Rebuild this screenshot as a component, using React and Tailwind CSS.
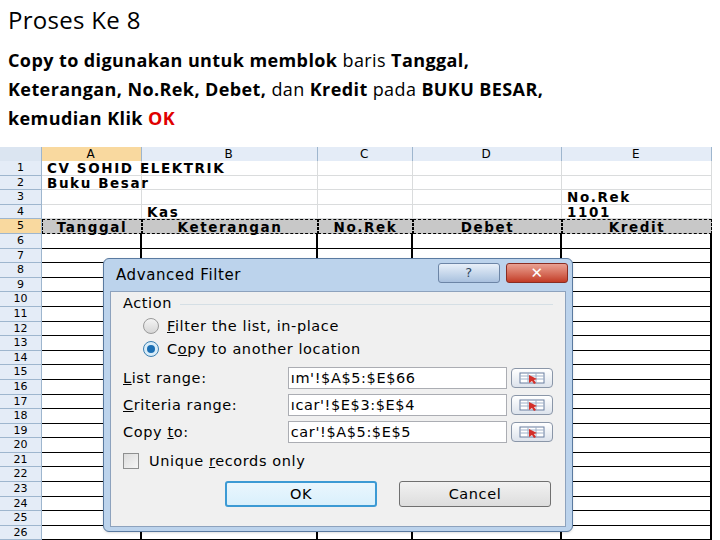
import React from "react";

const cols = [
  { k: "A", w: 100 },
  { k: "B", w: 176 },
  { k: "C", w: 95 },
  { k: "D", w: 149 },
  { k: "E", w: 150 },
];

const cells = {
  1: { A: "CV SOHID ELEKTRIK" },
  2: { A: "Buku Besar" },
  3: { E: "No.Rek" },
  4: { B: "Kas", E: "1101" },
  5: { A: "Tanggal", B: "Keterangan", C: "No.Rek", D: "Debet", E: "Kredit" },
};

function Pick() {
  return (
    <div className="w-[42px] h-[20px] border border-[#8a96a8] rounded-sm bg-gradient-to-b from-white to-[#dde3ec] flex items-center justify-center">
      <svg width="26" height="12" viewBox="0 0 26 12">
        <rect x="1" y="1" width="24" height="10" fill="#fff" stroke="#6a7fa0" />
        <path d="M1 4h24M1 7h24M9 1v10M17 1v10" stroke="#9fb0c8" />
        <path d="M10 3l8 4-3 1 2 3-2 1-2-3-3 2z" fill="#d3302a" />
      </svg>
    </div>
  );
}

export default function App() {
  const rows = Array.from({ length: 26 }, (_, i) => i + 1);
  return (
    <div className="w-[720px] h-[540px] overflow-hidden bg-white relative" style={{ fontFamily: "'Open Sans', 'Liberation Sans', sans-serif" }}>
      <div className="px-[8px] pt-[4px]">
        <div className="text-[24px] leading-[32px] text-black tracking-[0.3px]">Proses Ke 8</div>
        <div className="mt-[10px] text-[18px] leading-[29px] text-black tracking-[0.4px]">
          <b>Copy to digunakan untuk memblok</b> baris <b>Tanggal,</b>
          <br />
          <b>Keterangan, No.Rek, Debet,</b> dan <b>Kredit</b> pada <b>BUKU BESAR,</b>
          <br />
          <b>kemudian Klik </b>
          <b className="text-[#e00000]">OK</b>
        </div>
      </div>

      <div className="absolute left-0 top-[147px] text-[13.5px] font-bold" style={{ fontFamily: "'DejaVu Sans', sans-serif", letterSpacing: "1.6px" }}>
        <div className="flex h-[14px]">
          <div className="w-[42px] bg-[#dbe5f1] border-r border-[#9eb6ce]" />
          {cols.map((c) => (
            <div key={c.k} style={{ width: c.w }} className={`text-center text-[12px] font-normal leading-[14px] border-r border-[#9eb6ce] ${c.k === "A" ? "bg-[#f9d99f]" : "bg-[#e4ecf7]"}`}>
              {c.k}
            </div>
          ))}
        </div>
        {rows.map((r) => (
          <div key={r} className="flex h-[14.6px]">
            <div className={`w-[42px] text-center text-[11px] font-normal tracking-normal leading-[14.6px] border-b border-r border-[#9eb6ce] ${r === 5 ? "bg-[#f9d99f]" : "bg-[#e4ecf7]"}`}>{r}</div>
            {cols.map((c) => {
              const v = cells[r]?.[c.k];
              const border = r >= 6 ? "border-r-2 border-b border-black" : r === 5 ? "border border-dashed border-black bg-[#c8c8c8]" : "border-r border-b border-[#dadcdd]";
              const left = r === 1 || r === 2 || (r === 4 && c.k === "B") || (r <= 4 && c.k === "E");
              return (
                <div key={c.k} style={{ width: c.w }} className={`leading-[14px] whitespace-nowrap overflow-visible px-[5px] ${border} ${left ? "text-left" : "text-center"}`}>
                  {v}
                </div>
              );
            })}
          </div>
        ))}
      </div>

      <div className="absolute left-[103px] top-[258px] w-[470px] h-[274px] rounded-[6px] border border-[#5a7aa0] bg-[#bcd3ec] p-[6px] pt-0 shadow" style={{ fontFamily: "'DejaVu Sans', sans-serif", letterSpacing: "0.6px" }}>
        <div className="h-[32px] flex items-center justify-between pl-[6px]">
          <span className="text-[15px] text-black">Advanced Filter</span>
          <div className="flex gap-[6px] mr-[-2px] mt-[-4px]">
            <div className="w-[62px] h-[20px] rounded-[3px] border border-[#6c85a6] bg-gradient-to-b from-[#e8f0f9] to-[#a9c1de] flex items-center justify-center text-[13px] text-[#30465e]">?</div>
            <div className="w-[62px] h-[20px] rounded-[3px] border border-[#8a2d22] bg-gradient-to-b from-[#e9a193] to-[#c23a25] flex items-center justify-center text-white text-[15px] font-bold">✕</div>
          </div>
        </div>
        <div className="bg-[#f0f0f0] h-[236px] border border-[#8da2bd] px-[12px] pt-[2px] text-[14.5px] leading-[18px] text-black">
          <div className="flex items-center gap-[8px]">
            <span>Action</span>
            <div className="flex-1 border-t border-[#d5dfe5] mt-[2px]" />
          </div>
          <div className="pl-[20px] mt-[5px] space-y-[5px]">
            <div className="flex items-center gap-[8px]">
              <span className="w-[16px] h-[16px] rounded-full border border-[#9a9a9a] bg-gradient-to-b from-[#f4f4f4] to-[#d6d6d6]" />
              <span><u>F</u>ilter the list, in-place</span>
            </div>
            <div className="flex items-center gap-[8px]">
              <span className="w-[16px] h-[16px] rounded-full border border-[#3c7fb1] bg-[#d8ecf8] flex items-center justify-center">
                <span className="w-[8px] h-[8px] rounded-full bg-[#1b6fb4]" />
              </span>
              <span>C<u>o</u>py to another location</span>
            </div>
          </div>
          <div className="mt-[9px] space-y-[5px]">
            {[
              ["List range:", "L", "ım'!$A$5:$E$66"],
              ["Criteria range:", "C", "ıcar'!$E$3:$E$4"],
              ["Copy to:", "t", "car'!$A$5:$E$5"],
            ].map(([l, u, v], i) => (
              <div key={i} className="flex items-center">
                <span className="w-[170px]">
                  {i === 2 ? <>Copy <u>t</u>o:</> : <><u>{u}</u>{l.slice(1)}</>}
                </span>
                <div className="w-[226px] h-[22px] border border-[#abadb3] bg-white px-[2px] leading-[20px]">{v}</div>
                <div className="ml-[4px]"><Pick /></div>
              </div>
            ))}
          </div>
          <div className="flex items-center gap-[10px] mt-[9px]">
            <span className="w-[16px] h-[16px] border border-[#8e8f8f] bg-gradient-to-br from-[#dcdcdc] to-[#f6f6f6]" />
            <span>Unique <u>r</u>ecords only</span>
          </div>
          <div className="flex justify-end gap-[22px] mt-[11px] pr-[2px]">
            <div className="w-[152px] h-[26px] rounded-[3px] border-2 border-[#3c9ad4] bg-gradient-to-b from-[#eaf6fd] to-[#d9f0fc] flex items-center justify-center">OK</div>
            <div className="w-[152px] h-[26px] rounded-[3px] border border-[#707070] bg-gradient-to-b from-[#f2f2f2] to-[#dddddd] flex items-center justify-center">Cancel</div>
          </div>
        </div>
      </div>
    </div>
  );
}
